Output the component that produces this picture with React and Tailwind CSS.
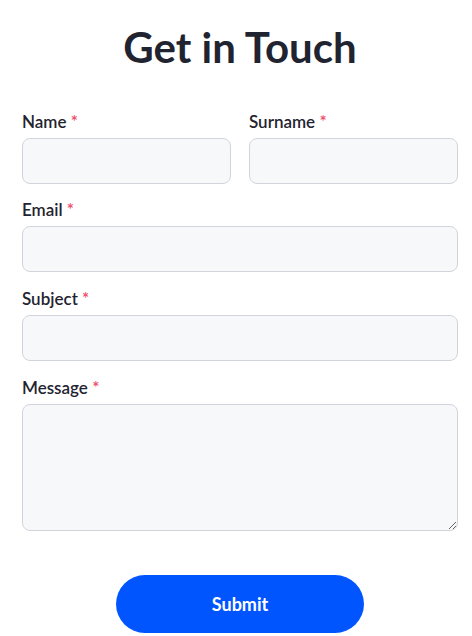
export default function App() {
  const fieldCls =
    "w-full h-[46px] rounded-lg border border-[#d1d5db] bg-[#f7f8fa] px-3 outline-none";

  const Label = ({ children }) => (
    <label className="block h-6 leading-6 text-[17px] font-semibold text-[#1f2430] mb-1">
      {children} <span className="text-[#f0506e]">*</span>
    </label>
  );

  return (
    <div className="min-h-screen bg-white pl-[22px] pr-[14px] pt-[23px] font-['Lato','Liberation_Sans',sans-serif]">
      <h1 className="text-center text-[42px] leading-[48px] font-bold text-[#1f2430] mb-[39px]">
        Get in Touch
      </h1>
      <form className="flex flex-col" onSubmit={(e) => e.preventDefault()}>
        <div className="grid grid-cols-2 gap-[18px]">
          <div>
            <Label>Name</Label>
            <input className={fieldCls} />
          </div>
          <div>
            <Label>Surname</Label>
            <input className={fieldCls} />
          </div>
        </div>
        <div className="mt-[14px]">
          <Label>Email</Label>
          <input className={fieldCls} />
        </div>
        <div className="mt-[15px]">
          <Label>Subject</Label>
          <input className={fieldCls} />
        </div>
        <div className="mt-[15px]">
          <Label>Message</Label>
          <textarea className="block w-full h-[127px] rounded-lg border border-[#d1d5db] bg-[#f7f8fa] px-3 py-2 outline-none" />
        </div>
        <div className="flex justify-center pt-[44px]">
          <button className="w-[248px] h-[58px] rounded-full bg-[#0055ff] text-white text-[18px] font-bold">
            Submit
          </button>
        </div>
      </form>
    </div>
  );
}
